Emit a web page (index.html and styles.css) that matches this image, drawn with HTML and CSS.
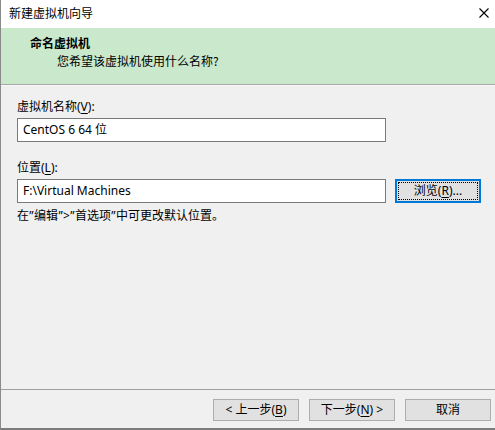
FILE: index.html
```html
<!DOCTYPE html>
<html lang="zh-CN">
<head>
<meta charset="utf-8">
<title>新建虚拟机向导</title>
<link rel="stylesheet" href="styles.css">
</head>
<body>
<div class="window">
  <div class="titlebar">
    <span class="title">新建虚拟机向导</span>
    <svg class="close" width="10" height="10" viewBox="0 0 10 10"><path d="M0.5 0.5 L9.5 9.5 M9.5 0.5 L0.5 9.5" stroke="#000" stroke-width="1.1" fill="none"/></svg>
  </div>
  <div class="header">
    <div class="h-title">命名虚拟机</div>
    <div class="h-sub">您希望该虚拟机使用什么名称?</div>
  </div>
  <div class="content">
    <div class="label first">虚拟机名称(<u>V</u>):</div>
    <div class="row">
      <div class="input">CentOS 6 64 位</div>
    </div>
    <div class="label second">位置(<u>L</u>):</div>
    <div class="row">
      <div class="input">F:\Virtual Machines</div>
      <div class="btn focused"><span class="focus-ring">浏览(<u>R</u>)...</span></div>
    </div>
    <div class="hint">在<span class="q">”</span>编辑<span class="q">”</span>&gt;<span class="q">”</span>首选项<span class="q">”</span>中可更改默认位置。</div>
  </div>
  <div class="footer">
    <div class="btn">&lt; 上一步(<u>B</u>)</div>
    <div class="btn">下一步(<u>N</u>) &gt;</div>
    <div class="btn">取消</div>
  </div>
</div>
</body>
</html>
```
FILE: styles.css
```css
html, body {
  margin: 0;
  padding: 0;
  background: #f0f0f0;
}
body {
  font-family: "Noto Sans", "Noto Sans CJK SC", sans-serif;
  font-size: 12px;
  color: #000;
}
.window {
  width: 495px;
  height: 430px;
  box-sizing: border-box;
  border-left: 1px solid #8a8a8a;
  border-bottom: 2px solid #7c7c7c;
  display: flex;
  flex-direction: column;
  background: #f0f0f0;
}
.titlebar {
  height: 28px;
  background: #fff;
  display: flex;
  align-items: center;
  justify-content: space-between;
  padding: 0 6px 0 8px;
  flex: none;
}
.title {
  font-family: "Noto Sans CJK SC", sans-serif;
  font-size: 12px;
  line-height: 28px;
  position: relative;
  top: -1px;
}
.close {
  margin-top: -2px;
}
.header {
  height: 56px;
  background: #cae8cc;
  border-bottom: 1px solid #a9a9a9;
  flex: none;
  box-sizing: content-box;
}
.h-title {
  font-family: "Noto Sans CJK SC", sans-serif;
  font-weight: bold;
  font-size: 12px;
  line-height: 16px;
  padding: 7px 0 0 29px;
}
.h-sub {
  font-family: "Noto Sans CJK SC", sans-serif;
  line-height: 16px;
  padding: 2px 0 0 56px;
}
.content {
  flex: 1;
  padding: 0 0 0 16px;
  border-top: 1px solid #f7f7f7;
}
.label {
  line-height: 16px;
}
.label.first {
  margin-top: 13px;
}
.label.second {
  margin-top: 18px;
}
u {
  text-decoration: underline;
  text-underline-offset: 2px;
}
.row {
  display: flex;
  align-items: flex-start;
  gap: 9px;
  margin-top: 3px;
}
.input {
  width: 369px;
  height: 24px;
  box-sizing: border-box;
  border: 1px solid #7a7a7a;
  background: #fff;
  padding: 0 5px;
  line-height: 22px;
}
.btn {
  width: 86px;
  height: 22px;
  box-sizing: border-box;
  background: #e1e1e1;
  border: 1px solid #adadad;
  display: flex;
  align-items: center;
  justify-content: center;
  line-height: 16px;
}
.btn.focused {
  height: 24px;
  border: 2px solid #0078d7;
  padding: 1px;
}
.focus-ring {
  flex: 1;
  align-self: stretch;
  border: 1px dotted #000;
  display: flex;
  align-items: center;
  justify-content: center;
}
.hint {
  margin-top: 5px;
  line-height: 16px;
  font-family: "Noto Sans", "Noto Sans CJK SC", sans-serif;
}
.q {
  font-family: "Noto Sans", sans-serif;
  display: inline-block;
  width: 5px;
  text-align: center;
}
.footer {
  flex: none;
  height: 39px;
  box-sizing: border-box;
  border-top: 1px solid #a0a0a0;
  display: flex;
  justify-content: flex-end;
  align-items: flex-start;
  gap: 10px;
  padding: 9px 4px 0 0;
}
```
